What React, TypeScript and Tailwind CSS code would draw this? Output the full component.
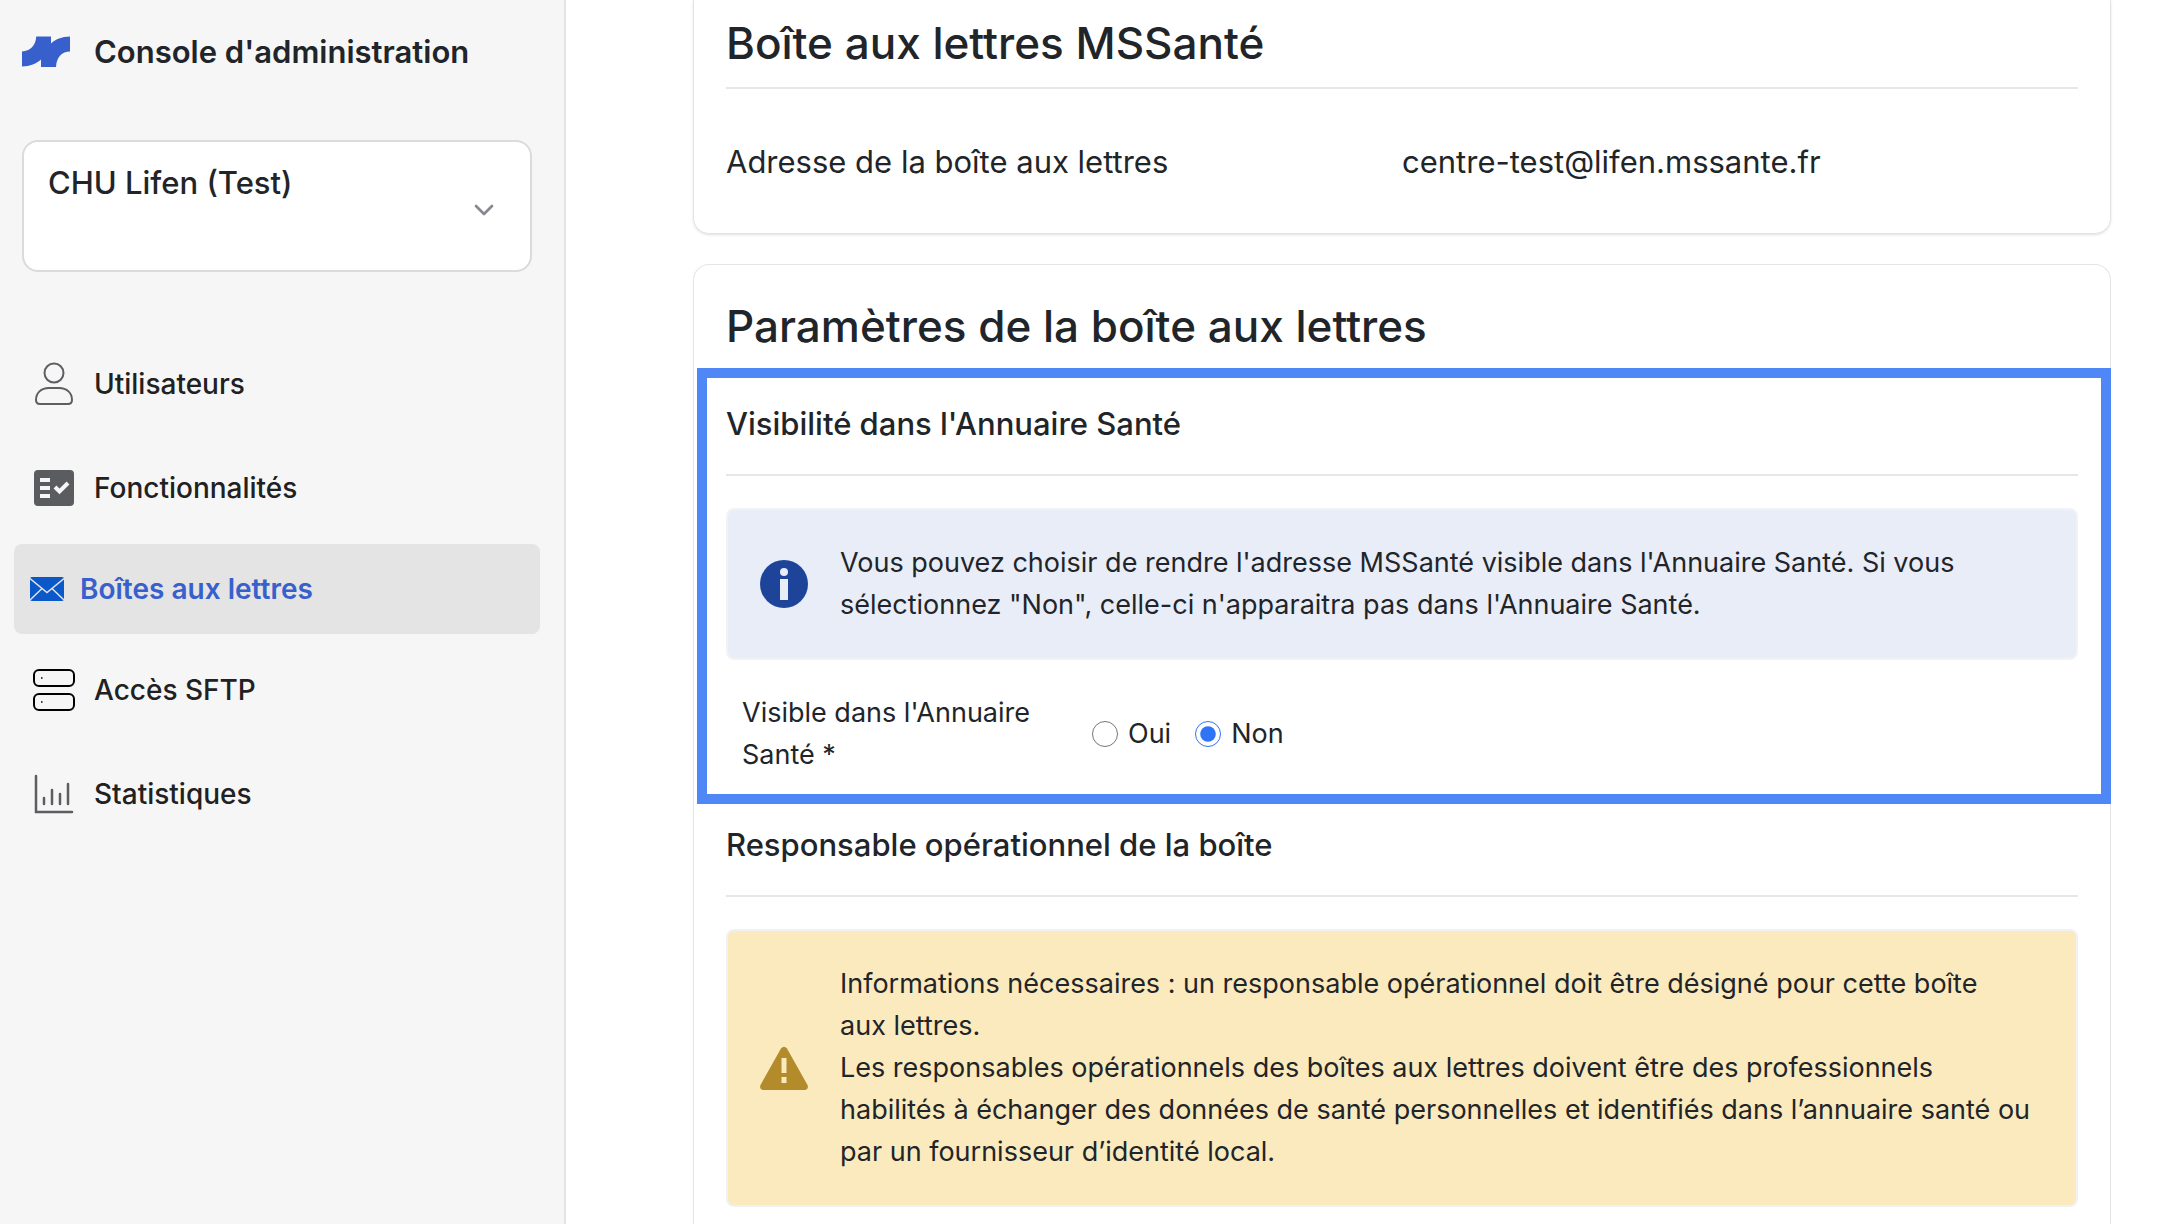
import React, { useState } from 'react';
import { ChevronDown } from 'lucide-react';

interface IconProps {
    className?: string;
}

const LogoIcon = () => (
    <svg width="48" height="32" viewBox="0 0 48 32" fill="#3860cd" aria-hidden="true">
        <path d="M0 15.4C8 15.4 14 9 14.200 0.500H29V7.500C33 3.500 40 0.500 48 0.500V15.400C40 15.400 34.500 21 34 31H19V23.500C14.500 27.500 8 30.500 0 30.500Z" />
    </svg>
);

const UserIcon: React.FC<IconProps> = ({ className }) => (
    <svg width="44" height="44" viewBox="0 0 44 44" fill="none" stroke="#5d5e62" strokeWidth="2" className={className}>
        <circle cx="22" cy="11" r="9.500" />
        <path d="M4 38C4 31 9 26 17 26H27C35 26 40 31 40 38C40 40.500 38.500 42 36 42H8C5.500 42 4 40.500 4 38Z" />
    </svg>
);

const FeaturesIcon: React.FC<IconProps> = ({ className }) => (
    <svg width="44" height="44" viewBox="0 0 44 44" className={className}>
        <rect x="2" y="4" width="40" height="36" rx="4" fill="#5b5c60" />
        <path d="M8 12H18V16H8ZM8 20H18V24H8ZM8 28H18V32H8Z" fill="#f6f6f6" />
        <path d="M23 21L27.500 25.500L36 17" fill="none" stroke="#f6f6f6" strokeWidth="4" />
    </svg>
);

const MailIcon: React.FC<IconProps> = ({ className }) => (
    <svg width="34" height="24" viewBox="0 0 34 24" className={className}>
        <rect width="34" height="24" rx="2" fill="#0a58ca" />
        <path d="M0 1.500L17 15.500L34 1.500M0 23L12 11.500M34 23L22 11.500" fill="none" stroke="#e4e4e4" strokeWidth="1.500" />
    </svg>
);

const ServerIcon: React.FC<IconProps> = ({ className }) => (
    <svg width="44" height="44" viewBox="0 0 44 44" fill="none" stroke="#000" strokeWidth="2" className={className}>
        <rect x="2" y="2" width="40" height="16" rx="5" />
        <rect x="2" y="26" width="40" height="16" rx="5" />
        <path d="M9 10H10.500M9 34H10.500" strokeWidth="1.500" />
    </svg>
);

const StatsIcon: React.FC<IconProps> = ({ className }) => (
    <svg width="44" height="44" viewBox="0 0 44 44" fill="none" stroke="#5d5e62" strokeWidth="2.500" strokeLinecap="round" className={className}>
        <path d="M4 4V40H40M12 26V32M20 18V32M28 22V32M36 12V32" />
    </svg>
);

const InfoIcon = () => (
    <svg width="48" height="48" viewBox="0 0 48 48" className="shrink-0">
        <circle cx="24" cy="24" r="24" fill="#1d4499" />
        <circle cx="24" cy="12" r="4" fill="#e9edf8" />
        <rect x="20" y="19" width="8" height="21" fill="#e9edf8" />
    </svg>
);

const WarningIcon = () => (
    <svg width="48" height="48" viewBox="0 0 48 48" className="shrink-0">
        <path d="M21 4.500Q24 1 27 4.500L47.500 41Q49 45.500 44.500 46H3.500Q-1 45.500 0.500 41Z" fill="#b38b2a" />
        <path d="M21.500 14H26.500V29H21.500ZM21.500 33H26.500V39H21.500Z" fill="#fbeabd" />
    </svg>
);

const navItems = [
    { label: 'Utilisateurs', icon: UserIcon },
    { label: 'Fonctionnalités', icon: FeaturesIcon },
    { label: 'Boîtes aux lettres', icon: MailIcon, active: true },
    { label: 'Accès SFTP', icon: ServerIcon },
    { label: 'Statistiques', icon: StatsIcon },
];

const Sidebar = () => (
    <aside className="w-[566px] shrink-0 border-r-2 border-[#e4e4e4] bg-[#f6f6f6]">
        <div className="flex h-[104px] items-center gap-6 px-[22px]">
            <LogoIcon />
            <h1 className="text-[31px] font-semibold text-[#212529]">Console d'administration</h1>
        </div>
        <div className="relative mt-9 mr-8 ml-[22px]">
            <select
                aria-label="Établissement"
                className="h-[132px] w-full appearance-none rounded-2xl border-2 border-[#dadadf] bg-white px-6 pb-[46px] text-[31px] font-medium text-[#212529]"
            >
                <option>CHU Lifen (Test)</option>
            </select>
            <ChevronDown className="pointer-events-none absolute top-[54px] right-8 h-8 w-8 text-[#868a90]" strokeWidth={2} />
        </div>
        <nav className="mt-16 mr-6 ml-[14px] flex flex-col gap-2">
            {navItems.map(({ label, icon: Icon, active }) => (
                <a
                    key={label}
                    href="#"
                    className={
                        active
                            ? 'flex h-[90px] items-center gap-4 rounded-lg bg-[#e4e4e4] px-4 text-[28px] font-semibold text-[#3860cd]'
                            : 'flex h-24 items-center gap-[18px] px-[18px] text-[28px] font-medium text-[#212121]'
                    }
                >
                    <Icon className="shrink-0" />
                    {label}
                </a>
            ))}
        </nav>
    </aside>
);

const SectionTitle = ({ children }: { children: React.ReactNode }) => (
    <h3 className="border-b-2 border-[#e7e7e7] pb-8 text-[31px] leading-[36px] font-medium">{children}</h3>
);

const App = () => {
    const [visible, setVisible] = useState('Non');

    return (
        <div className="flex h-screen overflow-hidden bg-white font-['Inter','Liberation_Sans',sans-serif] text-[#212529]">
            <Sidebar />
            <main className="min-w-0 flex-1 pr-[53px] pl-[127px]">
                <section className="rounded-b-2xl border border-t-0 border-[#e4e4e4] px-8 pb-12 shadow-sm">
                    <h2 className="border-b-2 border-[#e7e7e7] pt-4 pb-[17px] text-[44px] leading-[54px] font-medium">Boîte aux lettres MSSanté</h2>
                    <dl className="grid grid-cols-2 pt-[50px] text-[31px] leading-[46px]">
                        <dt>Adresse de la boîte aux lettres</dt>
                        <dd>centre-test@lifen.mssante.fr</dd>
                    </dl>
                </section>

                <section className="mt-[30px] rounded-t-2xl border border-b-0 border-[#e4e4e4] pt-[34px] pb-8">
                    <h2 className="px-8 text-[44px] leading-[54px] font-medium">Paramètres de la boîte aux lettres</h2>

                    <div className="mt-[15px] -mr-px ml-[3px] border-[10px] border-[#4f87f6] pt-[28px] pr-[23px] pb-[18px] pl-[19px]">
                        <SectionTitle>Visibilité dans l'Annuaire Santé</SectionTitle>
                        <div className="mt-8 flex items-center gap-8 rounded-lg border-2 border-[#f2f3f5] bg-[#e9edf8] p-8 text-[27px] leading-[42px]">
                            <InfoIcon />
                            <p>
                                Vous pouvez choisir de rendre l'adresse MSSanté visible dans l'Annuaire Santé. Si vous
                                sélectionnez "Non", celle-ci n'apparaitra pas dans l'Annuaire Santé.
                            </p>
                        </div>
                        <fieldset className="mt-8 flex items-center px-4 text-[27px] leading-[42px]">
                            <legend className="float-left w-[350px] pr-8">Visible dans l'Annuaire Santé *</legend>
                            <div className="flex gap-6">
                                {['Oui', 'Non'].map((value) => (
                                    <label key={value} className="flex items-center gap-[10px]">
                                        <input
                                            type="radio"
                                            name="visible"
                                            value={value}
                                            checked={visible === value}
                                            onChange={() => setVisible(value)}
                                            className="h-[26px] w-[26px] accent-[#2f73f6]"
                                        />
                                        {value}
                                    </label>
                                ))}
                            </div>
                        </fieldset>
                    </div>

                    <div className="px-8 pt-[23px]">
                        <SectionTitle>Responsable opérationnel de la boîte</SectionTitle>
                        <div className="mt-8 flex items-center gap-8 rounded-lg border-2 border-[#f0f1f3] bg-[#fbeabd] p-8 text-[27px] leading-[42px]">
                            <WarningIcon />
                            <p>
                                Informations nécessaires : un responsable opérationnel doit être désigné pour cette boîte aux&nbsp;lettres.
                                <br />
                                Les responsables opérationnels des boîtes aux lettres doivent être des professionnels habilités à
                                échanger des données de santé personnelles et identifiés dans l’annuaire santé ou par un fournisseur
                                d’identité local.
                            </p>
                        </div>
                    </div>
                </section>
            </main>
        </div>
    );
};

export default App;
